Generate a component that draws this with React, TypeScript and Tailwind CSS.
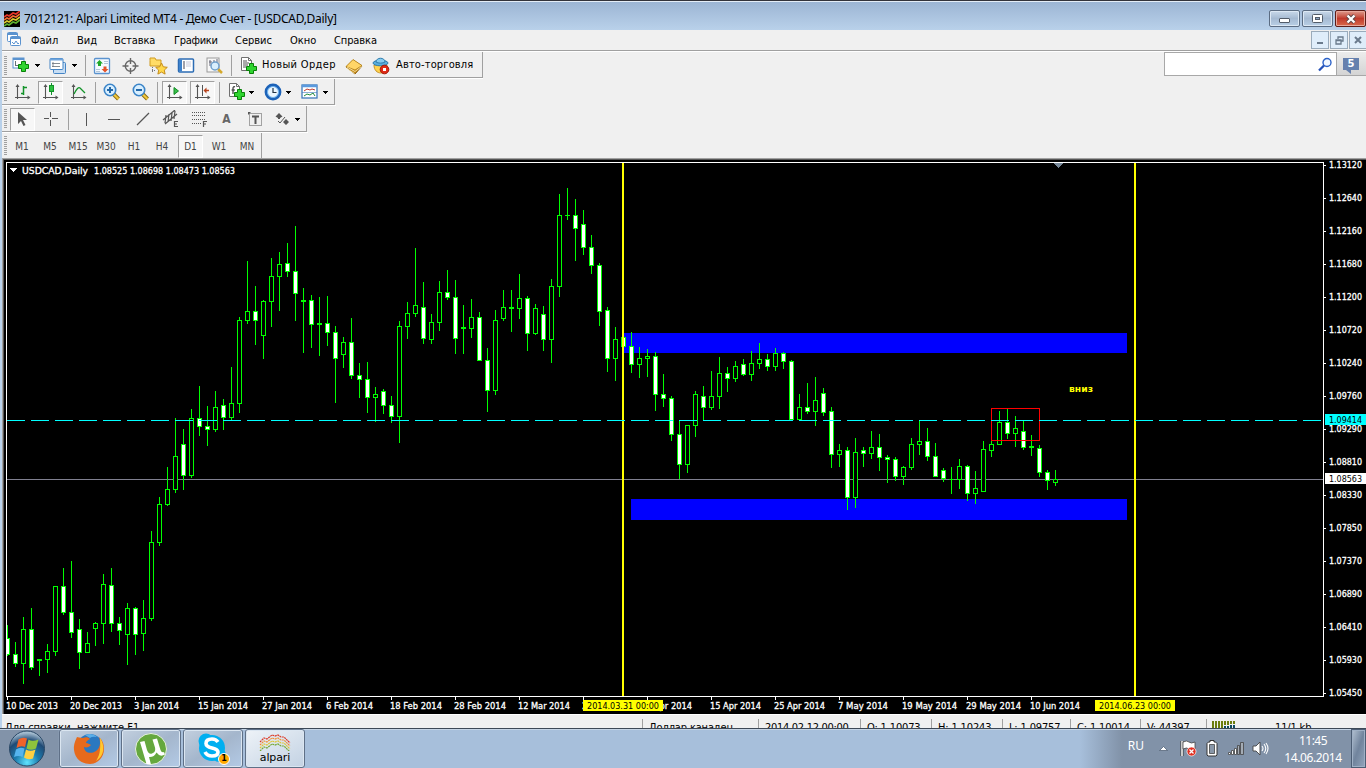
import React, { ReactNode } from 'react';

type Candle = [number, number, number, number, 0 | 1];

// high, body top, body bottom, low (chart pixels), filled
const candles: Candle[] = [
  [625, 638, 655, 656, 1], [642, 654, 664, 667, 1], [617, 629, 664, 684, 0], [608, 629, 668, 670, 1],
  [659, 659, 661, 676, 0], [644, 651, 660, 673, 0], [586, 586, 652, 656, 0], [568, 586, 613, 615, 1],
  [561, 612, 633, 638, 1], [619, 629, 653, 669, 1], [632, 643, 653, 653, 0], [622, 623, 629, 646, 0],
  [574, 584, 624, 644, 0], [568, 585, 624, 632, 1], [617, 623, 631, 645, 1], [603, 608, 635, 665, 0],
  [607, 608, 635, 655, 1], [600, 618, 634, 651, 0], [531, 542, 619, 621, 0], [497, 504, 543, 546, 0],
  [467, 489, 505, 506, 0], [418, 456, 490, 493, 0], [429, 444, 476, 490, 1], [409, 418, 476, 478, 0],
  [386, 418, 427, 436, 1], [406, 426, 430, 446, 1], [391, 407, 430, 432, 0], [399, 405, 418, 430, 1],
  [367, 403, 418, 420, 0], [317, 320, 404, 413, 0], [261, 311, 321, 324, 0], [286, 311, 321, 345, 1],
  [300, 301, 336, 359, 0], [258, 276, 302, 327, 0], [252, 264, 277, 311, 0], [243, 263, 272, 277, 1],
  [226, 271, 294, 321, 1], [288, 300, 302, 353, 0], [295, 300, 325, 348, 1], [297, 323, 325, 356, 0],
  [296, 323, 333, 346, 1], [326, 332, 359, 403, 1], [337, 342, 355, 368, 0], [318, 342, 376, 379, 1],
  [363, 375, 380, 398, 1], [362, 379, 398, 413, 1], [387, 394, 398, 422, 0], [389, 391, 406, 414, 1],
  [396, 405, 417, 423, 1], [321, 326, 417, 443, 0], [302, 313, 327, 339, 0], [248, 305, 314, 317, 0],
  [282, 307, 339, 344, 1], [314, 322, 340, 344, 0], [281, 292, 323, 331, 0], [270, 292, 298, 300, 1],
  [280, 297, 339, 354, 1], [305, 327, 329, 354, 0], [299, 317, 329, 338, 0], [312, 317, 361, 361, 1],
  [348, 360, 391, 412, 1], [310, 320, 391, 395, 0], [290, 307, 319, 321, 0], [290, 307, 309, 332, 0],
  [274, 298, 309, 319, 0], [296, 298, 334, 351, 1], [304, 308, 334, 335, 0], [306, 314, 340, 351, 1],
  [279, 286, 340, 363, 0], [194, 215, 287, 297, 0], [188, 215, 216, 220, 0], [199, 215, 229, 261, 1],
  [210, 224, 248, 255, 1], [235, 247, 266, 274, 1], [263, 265, 312, 326, 1], [307, 310, 359, 372, 1],
  [327, 339, 359, 381, 0], [337, 337, 347, 347, 1], [332, 346, 365, 373, 1], [347, 358, 365, 378, 0],
  [349, 356, 359, 377, 0], [352, 356, 395, 411, 1], [374, 394, 399, 407, 1], [396, 398, 435, 441, 1],
  [420, 434, 465, 479, 1], [425, 425, 465, 473, 0], [391, 394, 426, 437, 0], [386, 396, 408, 420, 1],
  [371, 396, 408, 410, 0], [357, 373, 397, 409, 0], [367, 373, 379, 392, 1], [361, 366, 379, 382, 0],
  [359, 364, 375, 376, 1], [351, 363, 375, 381, 0], [343, 359, 364, 369, 0], [354, 359, 367, 371, 1],
  [348, 353, 367, 371, 0], [352, 353, 362, 369, 1], [360, 361, 420, 420, 1], [394, 407, 420, 420, 0],
  [383, 407, 412, 414, 1], [377, 400, 412, 426, 0], [388, 393, 413, 416, 1], [407, 411, 455, 468, 1],
  [444, 450, 455, 467, 0], [447, 450, 498, 510, 1], [438, 452, 498, 508, 0], [447, 450, 454, 467, 1],
  [431, 447, 454, 459, 0], [434, 447, 458, 471, 1], [455, 457, 460, 483, 1], [457, 459, 477, 481, 1],
  [466, 467, 477, 485, 0], [438, 444, 468, 470, 0], [421, 441, 445, 455, 0], [428, 441, 457, 461, 1],
  [443, 456, 477, 477, 1], [468, 470, 479, 482, 1], [467, 479, 480, 494, 0], [459, 466, 480, 489, 0],
  [465, 466, 494, 501, 1], [471, 488, 494, 504, 0], [441, 449, 492, 492, 0], [441, 444, 451, 457, 0],
  [411, 422, 445, 445, 0], [409, 422, 434, 439, 1], [416, 428, 434, 447, 0], [421, 431, 448, 450, 1],
  [435, 446, 448, 456, 0], [445, 448, 473, 477, 1], [470, 472, 481, 490, 1], [470, 479, 483, 486, 0],
];

const prices = [
  '1.13120', '1.12640', '1.12160', '1.11680', '1.11200', '1.10720', '1.10240', '1.09760', '1.09290',
  '1.08810', '1.08330', '1.07850', '1.07370', '1.06890', '1.06410', '1.05930', '1.05450',
];

// label and drawn width
const dates: [string, number][] = [
  ['10 Dec 2013', 52], ['20 Dec 2013', 52], ['3 Jan 2014', 45], ['15 Jan 2014', 50], ['27 Jan 2014', 50],
  ['6 Feb 2014', 47], ['18 Feb 2014', 52], ['28 Feb 2014', 52], ['12 Mar 2014', 52], ['24 Mar 2014', 52],
  ['3 Apr 2014', 46], ['15 Apr 2014', 51], ['25 Apr 2014', 51], ['7 May 2014', 50], ['19 May 2014', 55],
  ['29 May 2014', 55], ['10 Jun 2014', 50],
];

const UI = "font-['DejaVu_Sans_Condensed','DejaVu_Sans',sans-serif]";

function Svg({ w = 18, h = 18, children }: { w?: number; h?: number; children: ReactNode }) {
  return (
    <svg width={w} height={h} viewBox={`0 0 ${w} ${h}`} fill="none" className="block shrink-0">
      {children}
    </svg>
  );
}

function Cell({ className = 'w-7', children }: { className?: string; children?: ReactNode }) {
  return <div className={`flex h-6 shrink-0 items-center justify-center ${className}`}>{children}</div>;
}

function Pressed({ className = '', children }: { className?: string; children: ReactNode }) {
  return (
    <div className={`flex h-[23px] w-[25px] shrink-0 items-center justify-center border border-r-white border-b-white border-l-[#a0a0a0] border-t-[#a0a0a0] bg-[#f7f7f7] ${className}`}>
      {children}
    </div>
  );
}

function Sep({ className = '' }: { className?: string }) {
  return <div className={`h-[21px] w-px shrink-0 bg-[#a0a0a0] ${className}`} />;
}

function Drop({ className = '' }: { className?: string }) {
  return (
    <div className={`flex w-[10px] shrink-0 justify-center ${className}`}>
      <svg width="5" height="3" className="block" shapeRendering="crispEdges"><path d="M0 0h5v1H4v1H3v1H2V2H1V1H0z" fill="#000" /></svg>
    </div>
  );
}

function Bar({ className, children }: { className: string; children: ReactNode }) {
  return (
    <div className={`flex items-center border-r border-[#a0a0a0] ${className}`}>
      <div className="ml-[2px] h-5 w-[3px] shrink-0 bg-[repeating-linear-gradient(to_bottom,#a0a0a0_0,#a0a0a0_1px,#f0f0f0_1px,#f0f0f0_2px)]" />
      {children}
    </div>
  );
}

const Plus = ({ x, y }: { x: number; y: number }) => (
  <path transform={`translate(${x} ${y})`} d="M3.5.5h4v3h3v4h-3v3h-4v-3h-3v-4h3z" fill="#2fd42f" stroke="#078007" />
);

const Axes = () => (
  <>
    <path d="M3.500 3v13M1 14.500h14" stroke="#555" strokeWidth="1.100" />
    <path d="M3.500 1l-2 3h4zM16.500 14.500l-3-2v4z" fill="#555" />
  </>
);

const Page = () => (
  <>
    <path d="M1.500.5h7l3 3v10h-10z" fill="#fff" stroke="#707070" />
    <path d="M8.500.5v3h3" stroke="#707070" />
  </>
);

function Zoom({ minus }: { minus?: boolean }) {
  return (
    <Svg>
      <path d="M10.500 11l5 5" stroke="#8a6a10" strokeWidth="4" />
      <path d="M10.500 11l5 5" stroke="#f2c83c" strokeWidth="2.200" />
      <circle cx="7" cy="7" r="5.700" fill="#d8efff" stroke="#3a84c8" strokeWidth="1.600" />
      <path d={minus ? 'M4 7h6' : 'M4 7h6M7 4v6'} stroke="#2468a8" strokeWidth="2" />
    </Svg>
  );
}

function TitleBar() {
  return (
    <div className="flex h-[30px] justify-between border-t border-[#33333b] bg-linear-to-b from-[#9bb4d3] to-[#b9d1ea] shadow-[inset_0_1px_0_#e4edf7]">
      <div className="flex items-center pl-1 pt-[6px]">
        <svg width="16" height="16" className="block bg-black" fill="none" strokeWidth="1.700">
          <path d="M0 6l3-2 2 1 4-3 3 1 4-3" stroke="#e8352a" />
          <path d="M0 9l3-2 2 1 4-3 3 1 4-3" stroke="#f26a30" />
          <path d="M0 12l3-2 2 1 4-3 3 1 4-3" stroke="#d8c92e" />
          <path d="M0 15l3-2 2 1 4-3 3 1 4-3" stroke="#5cb030" />
        </svg>
        <span className="ml-1 whitespace-nowrap font-['Noto_Sans','Open_Sans',sans-serif] text-[12px] leading-4 tracking-[-0.28px] text-black">
          7012121: Alpari Limited MT4 - Демо Счет - [USDCAD,Daily]
        </span>
      </div>
      <div className="flex gap-[2px] pt-[9px]">
        <div className="flex h-[17px] w-[31px] items-center justify-center rounded-[2px] border border-[#5b6c82] bg-linear-to-b from-[#c9d9ea] via-[#a5bad2] to-[#b9cfe6] pt-[4px] shadow-[inset_0_0_0_1px_#dce8f4]">
          <div className="h-[5px] w-[11px] rounded-[1px] border border-[#525c69] bg-white" />
        </div>
        <div className="flex h-[17px] w-[31px] items-center justify-center rounded-[2px] border border-[#5b6c82] bg-linear-to-b from-[#c9d9ea] via-[#a5bad2] to-[#b9cfe6] shadow-[inset_0_0_0_1px_#dce8f4]">
          <Svg w={11} h={9}><rect x=".5" y=".5" width="10" height="8" rx="1" fill="#fff" stroke="#525c69" /><rect x="3.500" y="3.500" width="4" height="2" fill="#8ca4c4" stroke="#525c69" /></Svg>
        </div>
        <div className="flex h-[17px] w-[31px] items-center justify-center rounded-[2px] border border-[#5d1c18] bg-linear-to-b from-[#dc9a8e] via-[#c0392c] to-[#d9694c] shadow-[inset_0_0_0_1px_#e8a89c]">
          <Svg w={12} h={10}><path d="M2.500 1.500l7 7M9.500 1.500l-7 7" stroke="#5a4648" strokeWidth="4" /><path d="M2.500 1.500l7 7M9.500 1.500l-7 7" stroke="#fff" strokeWidth="2.300" /></Svg>
        </div>
      </div>
    </div>
  );
}

function MenuBar() {
  const mdi = 'flex h-[18px] w-[18px] items-center justify-center border border-[#9aabbb] bg-[#dfedfa]';
  return (
    <div className="ml-[2px] flex h-[22px] border-b border-white">
      <div className="flex flex-1 items-start border-b border-[#a0a0a0]">
        <div className="ml-[5px] mt-[2px] w-[15px]">
          <svg width="15" height="15" className="block" fill="#fff" stroke="#5b93cf">
            <rect x=".5" y=".5" width="10" height="9" rx="1" /><path d="M.5 2h10" strokeWidth="2" />
            <rect x="3.500" y="4.500" width="10" height="9" rx="1" /><path d="M3.500 6h10" strokeWidth="2" />
            <path d="M5 10l2 2 2-3 2 3 1-1" fill="none" />
          </svg>
        </div>
        <div className={`flex h-5 flex-1 items-center whitespace-nowrap pt-[2px] text-[11px] text-black ${UI}`}>
          <span className="ml-[9px] w-[46px]">Файл</span>
          <span className="w-[37px]">Вид</span>
          <span className="w-[60px] tracking-[-0.1px]">Вставка</span>
          <span className="w-[61px] tracking-[-0.3px]">Графики</span>
          <span className="w-[55px]">Сервис</span>
          <span className="w-[44px]">Окно</span>
          <span className="tracking-[-0.1px]">Справка</span>
        </div>
        <div className="-mr-px flex gap-px pt-px">
          <div className={mdi}><div className="mt-[6px] h-[2px] w-[6px] bg-[#6a7a8c]" /></div>
          <div className={mdi}><Svg w={9} h={9}><path d="M3 3V1h5v4H6M1 4h5v4H1zM1 4.500h5" stroke="#6a7a8c" strokeWidth="1.300" /></Svg></div>
          <div className={mdi}><Svg w={8} h={8}><path d="M1 1l6 6M7 1L1 7" stroke="#6a7a8c" strokeWidth="2" /></Svg></div>
        </div>
      </div>
    </div>
  );
}

function MainBar() {
  return (
    <div className="ml-[2px] flex h-[27px] justify-between">
      <div className="border-b border-white">
        <Bar className="h-[26px] w-[481px] border-b pt-[2px]">
          <Cell className="ml-[3px] w-[22px]">
            <Svg><rect x="1" y="1" width="11" height="10" fill="#fff" stroke="#5b93cf" /><path d="M1 2h11" stroke="#5b93cf" strokeWidth="2" /><path d="M3.500 4v5M3 8.500h6" stroke="#66707a" /><Plus x={6} y={4} /></Svg>
          </Cell>
          <Drop />
          <Cell className="ml-[5px] w-[22px]">
            <Svg><rect x="4.500" y="5.500" width="12" height="11" rx="1" fill="#c8def4" stroke="#4585c5" /><rect x="1" y="1.500" width="13" height="11" rx="1" fill="#fff" stroke="#4585c5" /><path d="M1 2.500h13" stroke="#70a5dc" strokeWidth="2" /><path d="M4 5v5M3 9.500h8M3 6.500h8" stroke="#66707a" strokeWidth=".8" /></Svg>
          </Cell>
          <Drop />
          <Sep className="ml-[6px] mr-[2px]" />
          <Cell>
            <Svg><rect x="1.500" y="1.500" width="15" height="15" rx="1" fill="#f5faff" stroke="#5b93cf" strokeWidth="1.300" /><path d="M6.500 3l3.500 3.500H8V9H5V6.500H3z" fill="#1fa82a" /><path d="M12 15.500L8.500 12h2V9.500h3V12h2z" fill="#e5532a" /><path d="M11 4.500h4M11 6.500h4M3 12.500h4M3 14.500h4" stroke="#b4c6d8" /></Svg>
          </Cell>
          <Cell className="ml-px w-7">
            <Svg><circle cx="8.500" cy="9" r="5.200" stroke="#666" strokeWidth="1.400" /><path d="M8.500 1v6M8.500 11v6M.5 9h6M10.500 9h6" stroke="#666" strokeWidth="1.400" /></Svg>
          </Cell>
          <Cell className="-ml-px w-7">
            <Svg w={19}><path d="M1 3.500V1h5l1 2h5v6H1z" fill="#ffdc66" stroke="#cf9b20" /><path d="M3.500 10v6M3 13.500h4" stroke="#777" strokeDasharray="1 1" /><path d="M12.500 6l1.800 3.800 4 .5-3 2.800.8 4-3.600-2-3.600 2 .8-4-3-2.800 4-.5z" fill="#ffd84a" stroke="#c58c18" /></Svg>
          </Cell>
          <Cell>
            <Svg><rect x="1.500" y="2" width="15" height="13" rx="1" fill="#fff" stroke="#2c6cb4" strokeWidth="1.500" /><path d="M3.500 2.500v12" stroke="#3e82cc" strokeWidth="3" /><path d="M6 5h2M6 7h2M6 9h2M6 11h2" stroke="#445" /><path d="M9 5h5M9 7h5M9 9h5" stroke="#c8c8d8" /></Svg>
          </Cell>
          <Cell className="ml-px w-7">
            <Svg><rect x="1" y="1" width="12" height="14" fill="#f8f8f8" stroke="#999" /><path d="M4 3v6M3 5h3M8 3v4M11 2v8" stroke="#667" /><path d="M12 12l4 4" stroke="#d5a92c" strokeWidth="2.500" /><circle cx="9" cy="9" r="4" fill="#d9effd" stroke="#6f9fca" strokeWidth="1.500" /></Svg>
          </Cell>
          <Sep className="ml-[2px] mr-[6px]" />
          <Cell className="w-[22px]">
            <Svg><Page /><path d="M3 4h4M3 6h6M3 8h5M3 10h3" stroke="#555" /><Plus x={6} y={6} /></Svg>
          </Cell>
          <span className={`ml-[2px] w-[80px] shrink-0 whitespace-nowrap text-[11px] tracking-[0.35px] text-black ${UI}`}>Новый Ордер</span>
          <Cell className="w-6">
            <Svg><path d="M1 10l7-7 9 6-7 8z" fill="#c98d1c" stroke="#8f600c" /><path d="M1 9.500l7-7 9 6-7 4.500z" fill="#ffd568" stroke="#b07d18" strokeWidth=".8" /><path d="M1.500 11l8 5.500M2 10l8 4.500 6.500-5" stroke="#fff0b8" strokeWidth=".8" /></Svg>
          </Cell>
          <Cell className="ml-[3px] w-6">
            <Svg><path d="M2 8c0 5 3 8 7 8s6-3 6-8z" fill="#ffd34e" stroke="#c5922a" /><ellipse cx="8.500" cy="6" rx="7.500" ry="2.800" fill="#58aede" stroke="#2e7cac" /><path d="M4 5c0-5 9-5 9 0-2 1.500-7 1.500-9 0z" fill="#85cbef" stroke="#2e7cac" /><circle cx="12.500" cy="12.500" r="4.300" fill="#e02b16" stroke="#a31808" /><rect x="11" y="11" width="3" height="3" fill="#fff" /></Svg>
          </Cell>
          <span className={`ml-[3px] whitespace-nowrap text-[11px] tracking-[0.15px] text-black ${UI}`}>Авто-торговля</span>
        </Bar>
      </div>
      <div className="flex h-6">
        <div className="flex w-[173px] items-center justify-end border border-[#a8a8a8] bg-white pr-[3px]">
          <Svg w={15} h={15}><circle cx="9" cy="5.500" r="4" stroke="#2c62c8" strokeWidth="1.400" fill="#f2f8ff" /><path d="M6 8.500l-5 5" stroke="#2450b8" strokeWidth="2.300" /></Svg>
        </div>
        <div className="flex w-[29px] items-center justify-center border-b border-[#a8a8a8] bg-linear-to-b from-[#ececec] to-[#d4d4d4] pr-px">
          <div className="relative flex h-[12px] w-4 items-center justify-center bg-[#6580ae] text-[10px] font-bold leading-none text-white font-['DejaVu_Sans',sans-serif]">
            5
            <svg className="absolute left-[3px] top-[12px]" width="5" height="4"><path d="M0 0h5v4z" fill="#6580ae" /></svg>
          </div>
        </div>
      </div>
    </div>
  );
}

function ChartBar() {
  return (
    <div className="ml-[2px] h-[27px]">
      <Bar className="h-[26px] w-[333px] border-b pt-px">
        <Cell className="ml-[2px] w-7"><Svg><Axes /><path d="M9.500 3v9M7 10.500h2M10 4.500h3" stroke="#13932a" strokeWidth="1.500" /></Svg></Cell>
        <Pressed className="ml-px"><Svg><Axes /><path d="M9.500 0v12" stroke="#13932a" /><rect x="7.500" y="2.500" width="4" height="6" fill="#2cc040" stroke="#13932a" /></Svg></Pressed>
        <Cell className="ml-[2px] w-7"><Svg><Axes /><path d="M4 11q4-8 6-6t5 5" stroke="#13932a" strokeWidth="1.300" /></Svg></Cell>
        <Sep className="ml-[2px] mr-px" />
        <Cell className="w-[29px]"><Zoom /></Cell>
        <Cell className="w-[29px]"><Zoom minus /></Cell>
        <Sep className="ml-[2px] mr-1" />
        <Pressed><Svg><Axes /><path d="M8 4.500v7l4.500-3.500z" fill="#3ac04c" stroke="#138c24" /></Svg></Pressed>
        <Pressed className="ml-[3px]"><Svg><Axes /><path d="M8.500 2v11" stroke="#555" /><path d="M15 7.500h-3" stroke="#b8431c" strokeWidth="1.500" /><path d="M9.500 7.500l3-3v6z" fill="#b8431c" /></Svg></Pressed>
        <Sep className="ml-1 mr-[6px]" />
        <Cell className="w-[22px]"><Svg><Page /><path d="M7 4q-2-1-2 1.500V11M3.500 7H7" stroke="#333" strokeWidth="1.200" /><Plus x={6} y={6} /></Svg></Cell>
        <Drop className="-ml-[2px]" />
        <Cell className="ml-[6px] w-[22px]"><Svg><circle cx="9" cy="9" r="7" fill="#eaf6ff" stroke="#1c62b8" strokeWidth="2.800" /><circle cx="9" cy="9" r="5.500" stroke="#6db3ef" /><path d="M9 5v4.500h3.500" stroke="#234" strokeWidth="1.200" /></Svg></Cell>
        <Drop className="-ml-px" />
        <Cell className="ml-[6px] w-[22px]"><Svg><rect x="1" y="2" width="15" height="13" fill="#fff" stroke="#3f7cbc" strokeWidth="1.300" /><path d="M1 3h15" stroke="#5b9ade" strokeWidth="2.500" /><path d="M3 8l3-2 3 1 2-1 3 1" stroke="#c0392b" /><path d="M3 13l3-2 3 1 3-2 2 3" stroke="#228b3a" /><path d="M1 9.500h15" stroke="#3f7cbc" strokeWidth=".6" /></Svg></Cell>
        <Drop className="-ml-px" />
      </Bar>
      <div className="h-px w-[334px] bg-white" />
    </div>
  );
}

function LineBar() {
  const ink = '#555';
  return (
    <div className="ml-[2px] h-[27px]">
      <Bar className="h-[26px] w-[305px] border-b pt-px">
        <Pressed className="ml-[3px]"><Svg w={17}><path d="M4 2v12l3-3 2.500 5 2-1L9 10h4z" fill={ink} /></Svg></Pressed>
        <Cell className="ml-[2px] w-7"><Svg w={16} h={16}><path d="M7.500 1v5M7.500 9v6M1 7.500h5M9 7.500h6" stroke={ink} shapeRendering="crispEdges" /></Svg></Cell>
        <Sep className="ml-[3px] mr-[3px]" />
        <Cell><Svg><path d="M9.500 3v13" stroke={ink} /></Svg></Cell>
        <Cell><Svg><path d="M3 9.500h12" stroke={ink} /></Svg></Cell>
        <Cell className="w-[29px]"><Svg><path d="M3 15L15 3" stroke={ink} strokeWidth="1.200" /></Svg></Cell>
        <Cell className="w-7"><Svg><path d="M1 10L13 0M3 14L15 4M4 5l-1 8M7 4l-1 8M10 3L9 11M13 1l-1 8" stroke={ink} strokeWidth="1.200" /><path d="M16 11.500h-3.500v5H16M12.500 14H15" stroke={ink} strokeWidth="1.200" /></Svg></Cell>
        <Cell className="w-[29px]"><Svg><path d="M1 2.500h14M1 5.500h14M1 9.500h14M1 13.500h9" stroke={ink} strokeDasharray="1 1" /><path d="M12.500 17v-5.500H16M12.500 14H15" stroke={ink} strokeWidth="1.200" /></Svg></Cell>
        <Cell className="-ml-px w-[27px]"><span className="text-[12px] font-bold text-[#666] font-['DejaVu_Sans_Condensed','DejaVu_Sans',sans-serif]">A</span></Cell>
        <Cell className="w-[29px]"><Svg w={14} h={14}><rect x="1.500" y="1.500" width="12" height="12" stroke={ink} strokeDasharray="1 1" /><path d="M4 4.500h7M7.500 4v8" stroke={ink} strokeWidth="2" /><path d="M0 0h3L0 3z" fill={ink} /></Svg></Cell>
        <Cell className="-ml-px w-7"><Svg w={15} h={14}><path d="M4 1l3.500 3.500L5 6v1H3V6L.5 4.500zM11 7l3 3-3 3-3-3z" fill={ink} /><path d="M3 9l2 2 5-6" stroke={ink} /></Svg></Cell>
        <Drop className="-ml-1" />
      </Bar>
      <div className="h-px w-[306px] bg-white" />
    </div>
  );
}

function PeriodBar() {
  return (
    <div className="ml-[2px] h-[25px]">
      <Bar className="h-[25px] w-[260px] pt-px">
        <div className={`ml-px flex items-center text-center text-[10px] text-[#444] ${UI}`}>
          {['M1', 'M5', 'M15', 'M30', 'H1', 'H4', 'D1', 'W1', 'MN'].map((p) =>
            p === 'D1' ? (
              <Pressed key={p} className="mx-[2px]">{p}</Pressed>
            ) : (
              <span key={p} className="w-7">{p}</span>
            )
          )}
        </div>
      </Bar>
    </div>
  );
}

function Chart() {
  return (
    <div className="ml-[2px] h-[556px] border-l border-t border-[#a0a0a0]">
      <svg
        width="1363"
        height="555"
        viewBox="3 159 1363 555"
        shapeRendering="crispEdges"
        className="block bg-black font-['DejaVu_Sans_Condensed','DejaVu_Sans',sans-serif] text-[9.5px]"
      >
        <path d="M3 714V159h1363v1H4v554z" fill="#555" />
        <path d="M1054 163h9v1h-1v1h-1v1h-1v1h-1v1h-1v-1h-1v-1h-1v-1h-1v-1h-1z" fill="#778899" />
        <rect x="624" y="333" width="503" height="20" fill="#00f" />
        <rect x="631" y="499" width="496" height="21" fill="#00f" />
        <rect x="7" y="479" width="1317" height="1" fill="#808090" />

        {candles.map(([high, top, bottom, low, filled], i) => {
          const x = 7 + i * 8;
          return (
            <g key={i}>
              <rect x={x} y={high} width="1" height={low - high} fill="#0f0" />
              <rect x={x - 2} y={top} width="5" height={bottom - top} fill="#0f0" />
              {bottom - top > 2 && (
                <rect x={x - 1} y={top + 1} width="3" height={bottom - top - 2} fill={filled ? '#fff' : '#000'} />
              )}
            </g>
          );
        })}
        <rect x="4" y="600" width="2" height="90" fill="#000" />

        <rect x="991.5" y="408.5" width="48" height="32" fill="none" stroke="#f00" />
        <rect x="622" y="163" width="2" height="533" fill="#ff0" />
        <rect x="1134" y="163" width="2" height="533" fill="#ff0" />
        <path d="M7 420.500H1323" stroke="#0ff" strokeDasharray="18 6" />
        <path d="M6.500 696.500V162.500H1323.500V696.500z" fill="none" stroke="#fff" />

        <path d="M10 168h7v1h-1v1h-1v1h-1v1h-1v-1h-1v-1h-1v-1h-1z" fill="#fff" />
        <g fill="#fff" stroke="#fff" strokeWidth=".3">
          <text x="22" y="174" textLength="66" lengthAdjust="spacingAndGlyphs">USDCAD,Daily</text>
          <text x="94" y="174" textLength="141" lengthAdjust="spacingAndGlyphs">1.08525 1.08698 1.08473 1.08563</text>
        </g>

        {prices.map((p, i) => (
          <g key={p} fill="#fff">
            <rect x="1324" y={165 + i * 33} width="2" height="1" />
            <text x="1329" y={168 + i * 33} textLength="33" lengthAdjust="spacingAndGlyphs" stroke="#fff" strokeWidth=".3">{p}</text>
          </g>
        ))}
        <rect x="1325" y="414" width="41" height="11" fill="#0ff" />
        <text x="1329" y="423" fill="#000" textLength="33" lengthAdjust="spacingAndGlyphs">1.09414</text>
        <rect x="1325" y="473" width="41" height="11" fill="#fff" />
        <text x="1329" y="482" fill="#000" textLength="33" lengthAdjust="spacingAndGlyphs">1.08563</text>

        {dates.map(([label, w], i) => (
          <g key={label} fill="#fff">
            <rect x={7 + i * 64} y="697" width="1" height="3" />
            <text x={6 + i * 64} y="709" textLength={w} lengthAdjust="spacingAndGlyphs" stroke="#fff" strokeWidth=".3">{label}</text>
          </g>
        ))}
        <rect x="583" y="700" width="80" height="11" fill="#ff0" />
        <text x="587" y="709" fill="#000" textLength="72" lengthAdjust="spacingAndGlyphs">2014.03.31 00:00</text>
        <rect x="1095" y="700" width="80" height="11" fill="#ff0" />
        <text x="1099" y="709" fill="#000" textLength="72" lengthAdjust="spacingAndGlyphs">2014.06.23 00:00</text>
        <text
          x="1069"
          y="392"
          fill="#ff0"
          textLength="24"
          lengthAdjust="spacingAndGlyphs"
          className="text-[9.5px] font-bold font-['DejaVu_Sans',sans-serif]"
        >
          вниз
        </text>
      </svg>
    </div>
  );
}

function StatusBar() {
  const cell = 'h-[9px] shrink-0 border-l border-[#a0a0a0] pl-[6px]';
  return (
    <div className={`ml-[2px] flex h-[14px] items-start overflow-hidden border-t border-white pt-[4px] whitespace-nowrap text-[11px] leading-[18px] tracking-[-0.15px] text-black ${UI}`}>
      <span className="w-[640px] shrink-0 pl-[3px] tracking-[0px]">Для справки, нажмите F1</span>
      <div className={`${cell} w-[116px]`}>Доллар канадец</div>
      <div className={`${cell} w-[102px] tracking-[-0.3px]`}>2014.02.12 00:00</div>
      <div className={`${cell} w-[71px]`}>O: 1.10073</div>
      <div className={`${cell} w-[71px]`}>H: 1.10243</div>
      <div className={`${cell} w-[68px]`}>L: 1.09757</div>
      <div className={`${cell} w-[70px]`}>C: 1.10014</div>
      <div className={`${cell} w-[66px]`}>V: 44397</div>
      <div className={`${cell} flex`}>
        <svg width="24" height="9" className="mt-[2px] -ml-px block" shapeRendering="crispEdges">
          {[0, 3, 6, 9, 12, 15, 18, 21].map((x) => (
            <g key={x}>
              <rect x={x} y="0" width="2" height={x < 12 ? 9 : x < 18 ? 4 : 3} fill="#6b7d0e" />
              {x >= 12 && <rect x={x} y={x < 18 ? 5 : 4} width="2" height="5" fill="#0e4a62" />}
            </g>
          ))}
        </svg>
        <span className="ml-[39px]">11/1 kb</span>
      </div>
    </div>
  );
}

function Task({ active, children }: { active?: boolean; children: ReactNode }) {
  return (
    <div
      className={`flex h-[39px] w-[60px] shrink-0 items-center justify-center rounded-[3px] border border-[#5f7087] shadow-[inset_0_0_0_1px_#dbe6f1] ${
        active ? 'bg-linear-to-br from-[#eef3f8] to-[#c3d2e3]' : 'bg-linear-to-br from-[#c3d0df] via-[#a4b6cc] to-[#b3cae6]'
      }`}
    >
      {children}
    </div>
  );
}

function TaskBar() {
  return (
    <div className="flex h-10 border-t border-[#3d4856] bg-[linear-gradient(to_right,#8293a9_0,#8293a9_58px,#a7bfdb_62px,#a7bfdb_1080px,#8192a8_1122px,#8192a8_100%)] shadow-[inset_0_1px_0_#c5d4e5]">
      <div className="w-[59px] pl-2 pt-px">
        <svg width="38" height="38" className="block">
          <defs>
            <radialGradient id="orb" cx="50%" cy="90%" r="85%">
              <stop offset="0" stopColor="#5fe4ff" />
              <stop offset=".4" stopColor="#1c7cae" />
              <stop offset=".75" stopColor="#1f4a75" />
              <stop offset="1" stopColor="#a5bdd0" />
            </radialGradient>
          </defs>
          <circle cx="19" cy="18.500" r="17.500" fill="url(#orb)" stroke="#2a4866" />
          <path d="M10.500 9.500q4-3 8.500-1l-2 8.500q-4-2-8.500 1z" fill="#f0632a" />
          <path d="M20.500 9.500q4 2.500 10 0l-2.500 9q-5 2.500-9.500 0z" fill="#8fc43c" />
          <path d="M8 19.500q4-3 8.500-1l-2 8.500q-4-2-8.500 0z" fill="#56b4ee" />
          <path d="M18 19.500q4 2.500 9.500 0l-2.500 9q-5 2-9-1z" fill="#ffd042" />
        </svg>
      </div>
      <div className="flex gap-[2px]">
        <Task>
          <svg width="32" height="32" className="block">
            <circle cx="17" cy="14" r="13" fill="#2b78c0" />
            <path d="M12 2q7-3 12 2-5-1-7 1z" fill="#5aaee8" />
            <path d="M4 4q-4 8-3 13c1 9 8 14 16 14s14-7 14-15c0-6-2-9-5-12 2 6 1 11-3 14-6 4-12 1-12-4 3 1 5 0 7-2-2-1-3-2-5-2 0-2 2-3 4-4-2-2-4-2-7-1-3 0-5-1-6-1z" fill="#e66a1c" />
            <path d="M27 5c5 7 5 18-4 23 3-5 5-9 4-23z" fill="#ffc92e" />
          </svg>
        </Task>
        <Task>
          <svg width="32" height="32" className="block">
            <circle cx="16" cy="16" r="15.500" fill="#65a83e" stroke="#e6f0df" />
            <path d="M5 9l4.500-1 2.500 9q1.500 4.500 5 3.500 4-1 3-6l-2.500-8 4.500-1 3.500 11.500q1 3 3.500 2l1 2.500q-5 3-8.500-2-2.500 5-7.500 4.500l2 7.500-4.500-.5z" fill="#fff" />
          </svg>
        </Task>
        <Task>
          <div className="relative h-8 w-8">
            <svg width="32" height="32" className="block">
              <circle cx="15" cy="15" r="13" fill="#00aff0" />
              <circle cx="9" cy="8" r="7.500" fill="#00aff0" />
              <circle cx="22" cy="22" r="7" fill="#00aff0" />
              <path d="M21 9q-2-3-6-3-6 0-6 4.500 0 3 6 4.500t6 4q0 4-6 4-5 0-7-4" fill="none" stroke="#fff" strokeWidth="3.600" />
            </svg>
            <span className="absolute -right-px bottom-0 flex h-3 w-3 items-center justify-center rounded-full border border-white bg-[#ffa800] text-[8px] font-bold text-black font-['DejaVu_Sans',sans-serif]">1</span>
          </div>
        </Task>
        <Task active>
          <div className="flex flex-col items-center">
            <svg width="32" height="18" className="block" fill="none" strokeWidth="1.200" strokeDasharray="2 .6">
              <path d="M1 9l4-4 3 1 5-4 3 1 3-1 3 2 3 0 6 6" stroke="#dd3a25" />
              <path d="M1 12l4-4 3 1 5-4 3 1 3-1 3 2 3 0 6 6" stroke="#f09035" />
              <path d="M1 15l4-4 3 1 5-4 3 1 3-1 3 2 3 0 6 6" stroke="#dfc532" />
              <path d="M1 18l4-4 3 1 5-4 3 1 3-1 3 2 3 0 6 6" stroke="#75a834" />
            </svg>
            <span className="text-[11px] leading-[13px] tracking-[-0.1px] text-black font-['DejaVu_Sans',sans-serif]">alpari</span>
          </div>
        </Task>
      </div>
      <div className="flex flex-1 items-center justify-end font-['Noto_Sans','Open_Sans',sans-serif] text-[12px] text-white">
        <span className="mb-[6px] text-[12px]">RU</span>
        <svg width="9" height="5" className="ml-[15px] block"><path d="M.5 4.500l4-4 4 4z" fill="#fff" stroke="#46566b" strokeWidth=".7" /></svg>
        <svg width="17" height="17" className="ml-[12px] block">
          <path d="M2 1v15" stroke="#333" strokeWidth="3" /><path d="M2 1v15" stroke="#fff" strokeWidth="1.500" />
          <path d="M3 2q4-2 6 0t6 0v7q-4 2-6 0T3 9z" fill="#fff" stroke="#444" strokeWidth=".8" />
          <circle cx="11.500" cy="11.500" r="4.500" fill="#e03022" stroke="#fff" strokeWidth=".7" />
          <path d="M9.500 9.500l4 4M13.500 9.500l-4 4" stroke="#fff" strokeWidth="1.300" />
        </svg>
        <svg width="12" height="17" className="ml-[9px] block"><path d="M4 .5h4V2h1.500l1.500 1.500V15l-1 1H2l-1-1V3.500L2.500 2H4z" fill="#fff" stroke="#333" /><path d="M3.500 4.500h5v9h-5z" fill="#8997a8" stroke="#444" strokeWidth=".8" /></svg>
        <svg width="17" height="13" className="ml-[10px] block" fill="#fff" stroke="#444" strokeWidth=".8">
          <path d="M.5 10.500h2v2h-2zM3.500 8.500h2v4h-2zM6.500 6.500h2v6h-2z" /><path d="M9.500 3.500h2v9h-2zM12.500.5h3v12h-3z" fill="#a4acb5" />
        </svg>
        <svg width="17" height="15" className="ml-[7px] block" fill="none">
          <path d="M1 5h3l4-4v13l-4-4H1z" fill="#fff" stroke="#444" strokeWidth=".9" />
          <path d="M10 5q2 2.500 0 5M12 3q3.500 4.500 0 9M14 2q4 5.500 0 11" stroke="#fff" strokeWidth="1.100" />
        </svg>
        <div className="ml-[15px] w-[58px] text-center text-[12px] leading-[17px] tracking-[-0.5px]">
          <div>11:45</div>
          <div className="-mx-px whitespace-nowrap tracking-[-0.4px]">14.06.2014</div>
        </div>
        <div className="ml-[9px] h-full w-[15px] border border-[#4c5d74] bg-linear-to-br from-[#b4c2d2] via-[#71849d] to-[#93a5bc] shadow-[inset_0_0_0_1px_#9fb0c5]" />
      </div>
    </div>
  );
}

export default function App() {
  return (
    <div className="h-[768px] w-[1366px] overflow-hidden bg-[#b9d1ea]">
      <TitleBar />
      <div className="bg-[linear-gradient(to_right,#b9d1ea_0,#b9d1ea_2px,#f0f0f0_2px)]">
        <MenuBar />
        <MainBar />
        <ChartBar />
        <LineBar />
        <PeriodBar />
        <Chart />
        <StatusBar />
      </div>
      <TaskBar />
    </div>
  );
}
